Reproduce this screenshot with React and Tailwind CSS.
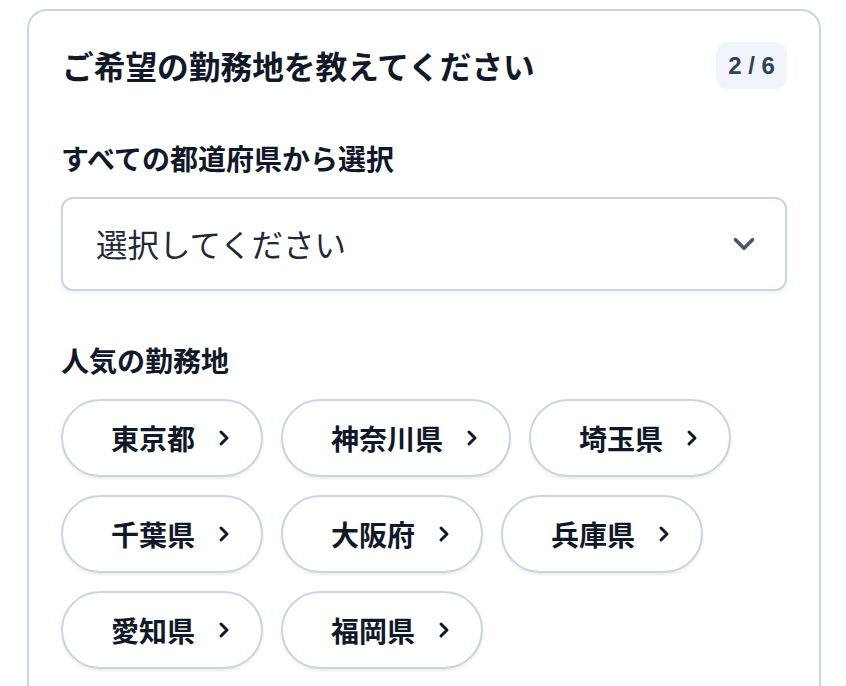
import React from "react";
import { ChevronDown, ChevronRight } from "lucide-react";

const font = { fontFamily: '"Noto Sans CJK JP", "Noto Sans", sans-serif' };

const prefs = [
  ["東京都", "神奈川県", "埼玉県"],
  ["千葉県", "大阪府", "兵庫県"],
  ["愛知県", "福岡県"],
];

function Pill({ name }) {
  return (
    <button className="flex h-[78px] items-center gap-[17px] rounded-full border-2 border-[#cbd5e1] bg-white pl-[48px] pr-[25px] shadow-[0_2px_3px_rgba(15,23,42,0.08)]">
      <span className="text-[28px] font-bold leading-none text-[#111827]">{name}</span>
      <ChevronRight size={24} strokeWidth={3} className="text-[#111827]" />
    </button>
  );
}

export default function App() {
  return (
    <div className="h-[686px] overflow-hidden bg-white pl-[27px] pr-[25px] pt-[9px]" style={font}>
      <div className="rounded-[20px] border-2 border-[#cbd5e1] px-[32px] pb-[60px] pt-[31px]">
        <div className="flex h-[47px] items-center justify-between">
          <h1 className="pl-[1px] text-[31.7px] font-bold leading-none text-[#111827]">
            ご希望の勤務地を教えてください
          </h1>
          <div className="flex h-[47px] w-[71px] items-center justify-center rounded-[12px] bg-[#f1f5f9] text-[24px] font-bold text-[#334155]" style={{ fontFamily: '"Liberation Sans", Arial, sans-serif' }}>
            2 / 6
          </div>
        </div>

        <div className="mt-[51px] text-[28px] font-bold leading-[36px] text-[#111827]">
          すべての都道府県から選択
        </div>
        <div className="mt-[21px] flex h-[94px] items-center justify-between rounded-[12px] border-2 border-[#cbd5e1] bg-white pl-[33px] pr-[24px] shadow-[0_2px_3px_rgba(15,23,42,0.06)]">
          <span className="text-[31.5px] font-normal leading-none text-[#1f2937]">選択してください</span>
          <ChevronDown size={34} strokeWidth={2.5} className="text-[#475569]" />
        </div>

        <div className="mt-[51px] text-[28px] font-bold leading-[36px] text-[#111827]">
          人気の勤務地
        </div>
        <div className="mt-[21px] flex flex-col gap-[18px]">
          {prefs.map((row, i) => (
            <div key={i} className="flex gap-[18px]">
              {row.map((p) => (
                <Pill key={p} name={p} />
              ))}
            </div>
          ))}
        </div>
      </div>
    </div>
  );
}
